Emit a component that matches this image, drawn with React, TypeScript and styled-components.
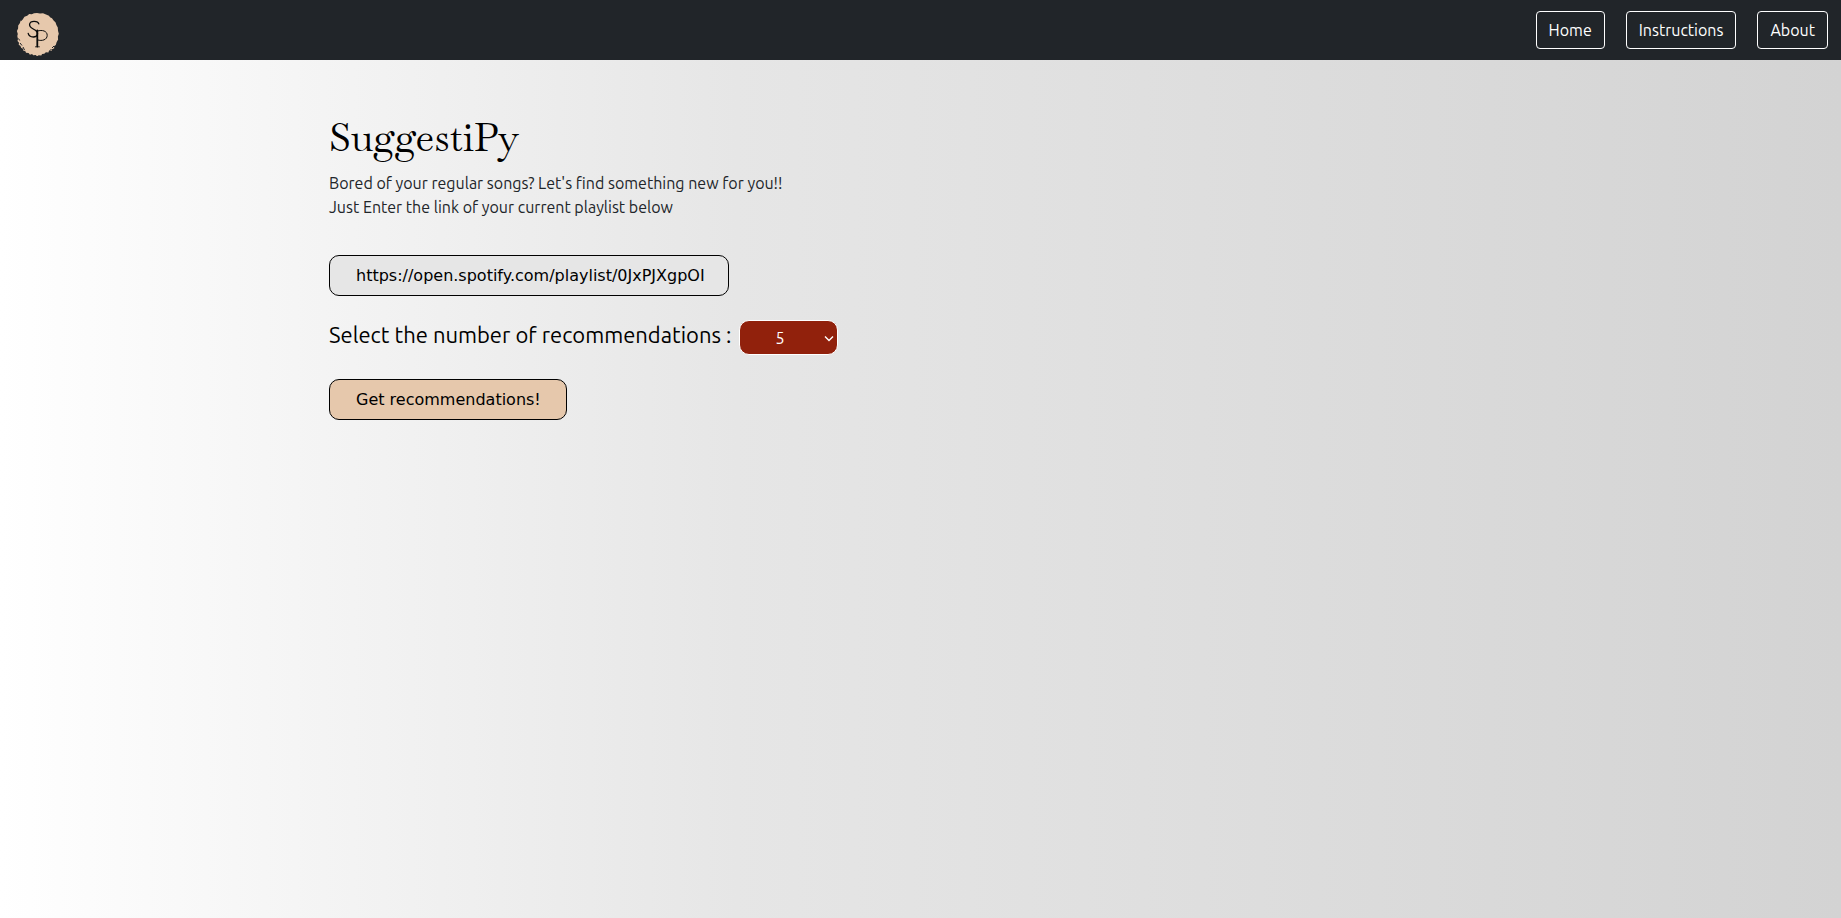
import React from 'react';
import styled, { createGlobalStyle } from 'styled-components';

const sans = "'Ubuntu', 'DejaVu Sans Condensed', sans-serif";
const control = "'DejaVu Sans', sans-serif";

const GlobalStyle = createGlobalStyle`
  *, *::before, *::after { box-sizing: border-box; }
  body {
    margin: 0;
    color: #212529;
    font-family: ${sans};
    font-size: 16px;
    line-height: 24px;
  }
`;

const Page = styled.div`
  display: flex;
  flex-direction: column;
  min-height: 100vh;
  background: linear-gradient(to right, #ffffff, #e6e6e6 40%, #d3d3d3);
`;

const Navbar = styled.header`
  display: flex;
  align-items: center;
  justify-content: space-between;
  height: 60px;
  padding: 0 13px 0 16px;
  background: #212529;
`;

const Brand = styled.a`
  display: flex;
  padding-top: 7px;
`;

const NavLinks = styled.nav`
  display: flex;
  gap: 21px;
`;

const NavLink = styled.a`
  padding: 6px 12px;
  border: 1px solid #fff;
  border-radius: 4px;
  color: #fff;
  text-decoration: none;
`;

const Main = styled.main`
  width: 100%;
  max-width: 1321px;
  margin: 0 auto;
  padding: 53px 69px;
`;

const Title = styled.h1`
  margin: 0 0 8px;
  color: #000;
  font-family: 'Baskervville', 'Liberation Serif', serif;
  font-size: 39px;
  font-weight: 400;
  line-height: 50px;
`;

const Intro = styled.p`
  margin: 0 0 36px;
`;

const Form = styled.form`
  display: flex;
  flex-direction: column;
  align-items: flex-start;
  gap: 24px;
`;

const LinkInput = styled.input`
  width: 400px;
  max-width: 100%;
  height: 41px;
  padding: 0 24px 0 26px;
  border: 1px solid #000;
  border-radius: 10px;
  background: #e6e6e6;
  color: #000;
  font: 16px ${control};
`;

const CountRow = styled.div`
  display: flex;
  align-items: center;
  gap: 8px;
`;

const CountLabel = styled.label`
  padding-bottom: 6px;
  color: #000;
  font-size: 22px;
  line-height: 28px;
`;

const SelectBox = styled.div`
  position: relative;
  display: flex;
`;

const CountSelect = styled.select`
  appearance: none;
  width: 99px;
  height: 35px;
  padding: 0 18px 0 0;
  border: 1px solid #fff;
  border-radius: 10px;
  background: #91210c;
  color: #fff;
  font: 16px ${sans};
  text-align: center;
`;

const Chevron = styled.svg`
  position: absolute;
  right: 4px;
  top: 15px;
  pointer-events: none;
`;

const SubmitButton = styled.button`
  height: 41px;
  padding: 0 25px 0 26px;
  border: 1px solid #000;
  border-radius: 10px;
  background: #e6c8ac;
  color: #000;
  font: 16px ${control};
`;

const Logo = () => (
  <svg width="44" height="44" viewBox="0 0 44 44" role="img" aria-label="SP">
    <path
      fill="#e6c8ac"
      d="M18 1.3 21 1l3 .4 3-.2 3 1.4 3 1.2 1 1.5 2 1 1.6 2.2 2 2 .8 2.6 1.4 2.5.2 3.2.8 3-.9 2.8.2 3-1.5 2.7-.8 2.6-1.8 1.4.3 2-2.2.9-.7 1.8-2.4-.2-.6 1.8-2.5-.4-1.6 1.5-2.2.2-.8 1.6-2.6-.2-1.6 1-1.4-1.4-2.6.4-1-1.2-2.2.6-1.3-1.6-2.6-.4-.6-1.4-2-.5-.4-2-2-1-.5-1.8-1.8-1.2.3-2-1.5-1.7.5-2L1.3 24l.5-2.1L.9 19l1.2-2.4.1-3 1.6-2.3.8-2.6L7 7l1.5-2.3 2.7-.9 2-1.8 2.6.3z"
    />
    <g fill="none" stroke="#212529" strokeWidth="1">
      <path d="M2.5 26.5l1.2 2M4 31l2 2.5M3 34l2 2M7 35l1.6 3.2M38 34l-2 2M35.5 37.5l-2 1M5 8.5l1.5-1" />
    </g>
    <g fill="none" stroke="#0b0b0b" strokeLinecap="round">
      <path
        strokeWidth="1.3"
        d="M22.8 11.8C22 8.8 14.5 8 13.6 12.2c-.6 3.6 3.2 4.2 5.8 6 3.6 2.5 2.4 6.8-2 6.8-2.8 0-4.8-1.6-5.2-3.6"
      />
      <path strokeWidth="1.8" d="M21.3 18.5V34.5" />
      <path strokeWidth=".8" d="M19.4 34.8h4" />
      <path strokeWidth="1" d="M21.6 19c4.6-1.5 9.6 0 9.6 4.3 0 4.6-5.2 6-9.4 4.7" />
    </g>
  </svg>
);

export default function App() {
  return (
    <Page>
      <GlobalStyle />
      <Navbar>
        <Brand href="#home">
          <Logo />
        </Brand>
        <NavLinks>
          <NavLink href="#home">Home</NavLink>
          <NavLink href="#instructions">Instructions</NavLink>
          <NavLink href="#about">About</NavLink>
        </NavLinks>
      </Navbar>
      <Main>
        <Title>SuggestiPy</Title>
        <Intro>
          Bored of your regular songs? Let's find something new for you!!
          <br />
          Just Enter the link of your current playlist below
        </Intro>
        <Form onSubmit={(event) => event.preventDefault()}>
          <LinkInput
            type="text"
            aria-label="Playlist link"
            defaultValue="https://open.spotify.com/playlist/0JxPJXgpOI"
          />
          <CountRow>
            <CountLabel htmlFor="count">Select the number of recommendations :</CountLabel>
            <SelectBox>
              <CountSelect id="count" defaultValue="5">
                <option>5</option>
                <option>10</option>
                <option>15</option>
                <option>20</option>
              </CountSelect>
              <Chevron width="10" height="7" viewBox="0 0 10 7" aria-hidden="true">
                <path d="M1 1.5 5 5.5l4-4" fill="none" stroke="#fff" strokeWidth="1.4" />
              </Chevron>
            </SelectBox>
          </CountRow>
          <SubmitButton type="submit">Get recommendations!</SubmitButton>
        </Form>
      </Main>
    </Page>
  );
}
